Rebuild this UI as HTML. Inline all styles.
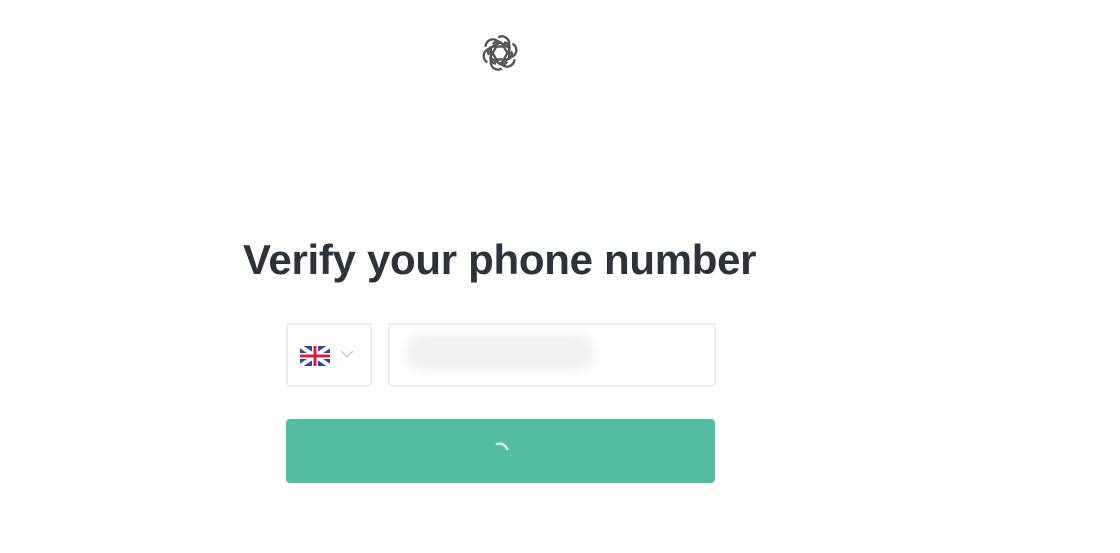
<!DOCTYPE html>
<html><head><style>
body{margin:0;width:1120px;height:553px;background:#fff;position:relative;overflow:hidden;font-family:"Liberation Sans",sans-serif}
h1{position:absolute;left:243px;top:236px;margin:0;font-size:42px;font-weight:bold;color:#2d333a;letter-spacing:-0.3px;white-space:nowrap}
.box{position:absolute;border:2px solid #ececec;border-radius:4px;box-sizing:border-box}
.btn{position:absolute;left:286px;top:419px;width:429px;height:64px;background:#53bca3;border-radius:4px}
</style></head><body>
<svg style="position:absolute;left:478px;top:31px" width="44" height="44" viewBox="0 0 24 24" fill="none" stroke="#555" stroke-width="1.3">
<g transform="translate(12 12)">
<g transform="rotate(0)"><path d="M-1 -8.5 A4 4 0 0 1 5 -5.5 L5 3"/></g>
<g transform="rotate(60)"><path d="M-1 -8.5 A4 4 0 0 1 5 -5.5 L5 3"/></g>
<g transform="rotate(120)"><path d="M-1 -8.5 A4 4 0 0 1 5 -5.5 L5 3"/></g>
<g transform="rotate(180)"><path d="M-1 -8.5 A4 4 0 0 1 5 -5.5 L5 3"/></g>
<g transform="rotate(240)"><path d="M-1 -8.5 A4 4 0 0 1 5 -5.5 L5 3"/></g>
<g transform="rotate(300)"><path d="M-1 -8.5 A4 4 0 0 1 5 -5.5 L5 3"/></g>
<g transform="rotate(30)"><path d="M-1 -6 A3 3 0 0 1 3.5 -4 L3.5 1.5"/></g>
<g transform="rotate(90)"><path d="M-1 -6 A3 3 0 0 1 3.5 -4 L3.5 1.5"/></g>
<g transform="rotate(150)"><path d="M-1 -6 A3 3 0 0 1 3.5 -4 L3.5 1.5"/></g>
<g transform="rotate(210)"><path d="M-1 -6 A3 3 0 0 1 3.5 -4 L3.5 1.5"/></g>
<g transform="rotate(270)"><path d="M-1 -6 A3 3 0 0 1 3.5 -4 L3.5 1.5"/></g>
<g transform="rotate(330)"><path d="M-1 -6 A3 3 0 0 1 3.5 -4 L3.5 1.5"/></g>
</g></svg>
<h1>Verify your phone number</h1>
<div class="box" style="left:286px;top:323px;width:86px;height:64px"></div>
<svg style="position:absolute;left:300px;top:346px" width="30" height="20" viewBox="0 0 30 20">
<rect width="30" height="20" rx="3" fill="#3a3f9a"/>
<path d="M0 0L30 20M30 0L0 20" stroke="#fff" stroke-width="4"/>
<path d="M15 0V20M0 10H30" stroke="#fff" stroke-width="6"/>
<path d="M15 0V20M0 10H30" stroke="#d3233c" stroke-width="3"/>
</svg>
<svg style="position:absolute;left:340px;top:349px" width="14" height="10"><path d="M1 2l6 6 6-6" stroke="#ccc" stroke-width="1.5" fill="none"/></svg>
<div class="box" style="left:388px;top:323px;width:328px;height:64px"></div>
<div style="position:absolute;left:405px;top:335px;width:190px;height:36px;background:#f1f1f1;border-radius:18px;filter:blur(5px)"></div>
<div class="btn"></div>
<svg style="position:absolute;left:493px;top:437px" width="22" height="20"><path d="M4 7 A8 8 0 0 1 14 12" stroke="#d8f0ea" stroke-width="2.5" fill="none" stroke-linecap="round"/></svg>
</body></html>
